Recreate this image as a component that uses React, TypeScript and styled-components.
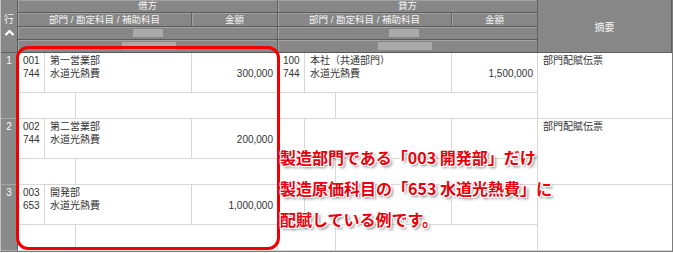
import React from "react";
import styled, { createGlobalStyle } from "styled-components";

const GlobalStyle = createGlobalStyle`
  body {
    margin: 0;
    background: #fff;
  }
`;

const Table = styled.div`
  position: relative;
  width: 673px;
  box-sizing: border-box;
  border-left: 1px solid #c4c4c4;
  border-right: 1px solid #7c7c7c;
  border-bottom: 1px solid #7c7c7c;
  box-shadow: 1px 1px 0 #d2d2d2;
  font-family: "Liberation Sans", "Noto Sans CJK JP", sans-serif;
`;

const HeadRow = styled.div`
  display: grid;
  grid-template-columns: 17px 260px 260px 1fr;
  height: 53px;
`;

const GrayBlock = styled.div`
  background: #878787;
  color: #f4f4f4;
  font-size: 10px;
  display: flex;
  flex-direction: column;
  align-items: center;
  justify-content: center;
  border-right: 1px solid #5f5f5f;
  border-bottom: 1px solid #5f5f5f;
  box-sizing: border-box;
`;

const RowHead = styled(GrayBlock)`
  justify-content: flex-start;
  padding-top: 14px;
  gap: 3px;
  line-height: 12px;
`;

const SideHead = styled.div`
  display: grid;
  grid-template-columns: 174px 86px;
  grid-template-rows: 13px 14px 13px 13px;
`;

const HCell = styled.div<{ $wide?: boolean }>`
  grid-column: ${(p) => (p.$wide ? "1 / 3" : "auto")};
  background: #878787;
  color: #f4f4f4;
  font-size: 9.5px;
  line-height: 12px;
  display: flex;
  align-items: center;
  justify-content: center;
  border-right: 1px solid #626262;
  border-bottom: 1px solid #5a5a5a;
  box-shadow: inset 1px 1px 0 #a2a2a2;
  box-sizing: border-box;
`;

const Blur = styled.div<{ $w: number; $dx: number }>`
  width: ${(p) => p.$w}px;
  height: 8px;
  margin-left: ${(p) => p.$dx}px;
  background: #a9a9a9;
  filter: blur(0.6px);
`;

const Record = styled.div`
  display: grid;
  grid-template-columns: 17px 260px 260px 1fr;
  height: 66px;
`;

const NumCell = styled.div`
  background: #8a8a8a;
  color: #fafafa;
  font-size: 10px;
  line-height: 13px;
  text-align: center;
  padding-top: 1px;
  border-right: 1px solid #5f5f5f;
  border-bottom: 1px solid #a6a6a6;
  box-sizing: border-box;
`;

const Side = styled.div`
  display: grid;
  grid-template-rows: 40px 26px;
`;

const MainLine = styled.div`
  display: grid;
  grid-template-columns: 27px 147px 86px;
`;

const SubLine = styled.div`
  display: grid;
  grid-template-columns: 58px 1fr;
`;

const Cell = styled.div<{ $right?: boolean; $tight?: boolean }>`
  font-size: 10px;
  line-height: 13px;
  color: #333;
  padding: ${(p) => (p.$tight ? "1px 0 0 5px" : "1px 4px 0 5px")};
  text-align: ${(p) => (p.$right ? "right" : "left")};
  border-right: 1px solid #d8d8d8;
  border-bottom: 1px solid #d8d8d8;
  box-sizing: border-box;
  white-space: nowrap;
  overflow: hidden;
`;

const Memo = styled(Cell)`
  border-right: none;
`;

const RedFrame = styled.div`
  position: absolute;
  left: 15px;
  top: 46px;
  width: 264px;
  height: 204px;
  border: 3px solid #f20000;
  border-radius: 12px;
  box-sizing: border-box;
  pointer-events: none;
`;

const Note = styled.div`
  position: absolute;
  left: 279px;
  top: 142px;
  font-family: "Noto Sans CJK JP", sans-serif;
  font-weight: 700;
  font-size: 16px;
  line-height: 31px;
  color: #e8000c;
  white-space: nowrap;
  text-shadow: -1px -1px 0 #fff, 1px -1px 0 #fff, -1px 1px 0 #fff,
    1px 1px 0 #fff, 0 -1px 0 #fff, 0 1px 0 #fff, -1px 0 0 #fff, 1px 0 0 #fff,
    2px 2px 3px rgba(0, 0, 0, 0.55);
`;

const Chevron = () => (
  <svg width="11" height="7" viewBox="0 0 11 7">
    <polyline
      points="1.5,6 5.5,2 9.5,6"
      fill="none"
      stroke="#fff"
      strokeWidth="2.2"
    />
  </svg>
);

interface Entry {
  dept: string;
  deptName: string;
  acct: string;
  acctName: string;
  amount: string;
}

interface Row {
  no: number;
  debit: Entry;
  credit?: Entry;
  memo: string;
}

const rows: Row[] = [
  {
    no: 1,
    debit: { dept: "001", deptName: "第一営業部", acct: "744", acctName: "水道光熱費", amount: "300,000" },
    credit: { dept: "100", deptName: "本社（共通部門）", acct: "744", acctName: "水道光熱費", amount: "1,500,000" },
    memo: "部門配賦伝票"
  },
  {
    no: 2,
    debit: { dept: "002", deptName: "第二営業部", acct: "744", acctName: "水道光熱費", amount: "200,000" },
    memo: "部門配賦伝票"
  },
  {
    no: 3,
    debit: { dept: "003", deptName: "開発部", acct: "653", acctName: "水道光熱費", amount: "1,000,000" },
    memo: ""
  }
];

const EntryBlock = ({ entry }: { entry?: Entry }) => (
  <Side>
    <MainLine>
      <Cell $tight>
        {entry && (
          <>
            {entry.dept}
            <br />
            {entry.acct}
          </>
        )}
      </Cell>
      <Cell>
        {entry && (
          <>
            {entry.deptName}
            <br />
            {entry.acctName}
          </>
        )}
      </Cell>
      <Cell $right>
        {entry && (
          <>
            <br />
            {entry.amount}
          </>
        )}
      </Cell>
    </MainLine>
    <SubLine>
      <Cell />
      <Cell />
    </SubLine>
  </Side>
);

const SideHeader = ({ title, dx }: { title: string; dx: number }) => (
  <SideHead>
    <HCell $wide>{title}</HCell>
    <HCell>部門 / 勘定科目 / 補助科目</HCell>
    <HCell>金額</HCell>
    <HCell $wide>
      <Blur $w={30} $dx={dx} />
    </HCell>
    <HCell $wide>
      <Blur $w={54} $dx={dx + 2} />
    </HCell>
  </SideHead>
);

const App = () => {
  return (
    <>
      <GlobalStyle />
      <Table>
        <HeadRow>
          <RowHead>
            <span>行</span>
            <Chevron />
          </RowHead>
          <SideHeader title="借方" dx={0} />
          <SideHeader title="貸方" dx={-8} />
          <GrayBlock>摘要</GrayBlock>
        </HeadRow>
        {rows.map((r) => (
          <Record key={r.no}>
            <NumCell>{r.no}</NumCell>
            <EntryBlock entry={r.debit} />
            <EntryBlock entry={r.credit} />
            <Memo>{r.memo}</Memo>
          </Record>
        ))}
        <RedFrame />
        <Note>
          製造部門である「003 開発部」だけ
          <br />
          製造原価科目の「653 水道光熱費」に
          <br />
          配賦している例です。
        </Note>
      </Table>
    </>
  );
};

export default App;
